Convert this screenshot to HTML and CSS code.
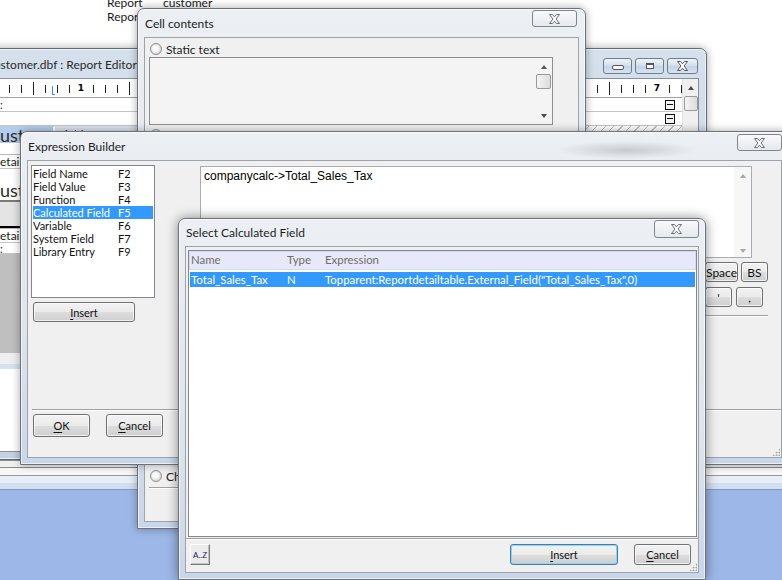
FILE: index.html
```html
<!DOCTYPE html>
<html>

<head>
    <meta charset="utf-8">
    <meta name="viewport" content="width=device-width, initial-scale=1.0">
    <title>Select Calculated Field</title>
    <link rel="stylesheet" href="styles.css">
</head>

<body>
    <div class="desktop">

        <div class="behind-text">
            <span>Report</span><span>customer</span>
            <span>Report</span><span>company</span>
        </div>

        <!-- report editor, mostly covered -->
        <div class="win report-editor">
            <div class="titlebar">
                <span class="title">Customer.dbf : Report Editor</span>
                <div class="caption-btns">
                    <span class="cbtn"><span class="ico-min"></span></span>
                    <span class="cbtn"><span class="ico-max"></span></span>
                    <span class="cbtn cbtn-close">
                        <svg width="13" height="10" viewBox="0 0 13 10"><path d="M1.5 .5h3l2 2.3 2-2.3h3l-3.4 4.5 3.4 4.5h-3l-2-2.3-2 2.3h-3l3.4-4.5z" fill="#fff" stroke="#4f5762"/></svg>
                    </span>
                </div>
            </div>
            <div class="client re-client">
                <div class="re-canvas">
                    <div class="ruler">
                        <span class="ruler-mark"></span>
                        <span class="rnum"><b>1</b></span>
                        <span class="rnum"><b>2</b></span>
                        <span class="rnum"><b>3</b></span>
                        <span class="rnum"><b>4</b></span>
                        <span class="rnum"><b>5</b></span>
                        <span class="rnum"><b>6</b></span>
                        <span class="rnum"><b>7</b></span>
                    </div>
                    <div class="re-row"><span>:</span><span class="collapse"></span></div>
                    <div class="re-row"><span></span><span class="collapse"></span></div>
                    <div class="re-head">
                        <span class="band-name">Customer</span>
                        <span class="field-cell">Field Name</span>
                    </div>
                    <div class="re-gap"></div>
                    <div class="re-row re-detail"><span>Detail</span></div>
                    <div class="re-gap"></div>
                    <div class="re-big">Customer</div>
                    <div class="re-shade"></div>
                    <div class="re-row re-detail"><span>Detail</span></div>
                    <div class="re-row re-colon"><span>:</span></div>
                    <div class="re-dark"></div>
                    <div class="re-light"></div>
                    <div class="re-tint"></div>
                </div>
                <div class="vscroll re-scroll">
                    <span class="arr-up"></span>
                    <span class="thumb"></span>
                </div>
            </div>
        </div>

        <div class="app-bottom"></div>

        <!-- cell contents -->
        <div class="win cell-contents">
            <div class="titlebar">
                <span class="title">Cell contents</span>
                <span class="close">
                    <svg width="13" height="10" viewBox="0 0 13 10"><path d="M1.5 .5h3l2 2.3 2-2.3h3l-3.4 4.5 3.4 4.5h-3l-2-2.3-2 2.3h-3l3.4-4.5z" fill="#fafafa" stroke="#6b7079"/></svg>
                </span>
            </div>
            <div class="client cc-client">
                <label class="opt"><span class="radio"></span>Static text</label>
                <div class="cc-text">
                    <div class="vscroll cc-scroll">
                        <span class="arr-up"></span>
                        <span class="thumb"></span>
                        <span class="arr-down"></span>
                    </div>
                </div>
                <label class="opt"><span class="radio"></span>Calculated</label>
                <div class="cc-bottom">
                    <label class="opt"><span class="radio"></span>Child band</label>
                    <div class="etched"></div>
                </div>
            </div>
        </div>

        <!-- expression builder -->
        <div class="win expr-builder">
            <div class="titlebar">
                <span class="title">Expression Builder</span>
                <span class="close">
                    <svg width="13" height="10" viewBox="0 0 13 10"><path d="M1.5 .5h3l2 2.3 2-2.3h3l-3.4 4.5 3.4 4.5h-3l-2-2.3-2 2.3h-3l3.4-4.5z" fill="#fafafa" stroke="#6b7079"/></svg>
                </span>
            </div>
            <div class="client eb-client">
                <div class="eb-main">
                    <div class="eb-left">
                        <ul class="listbox">
                            <li><span>Field Name</span><span>F2</span></li>
                            <li><span>Field Value</span><span>F3</span></li>
                            <li><span>Function</span><span>F4</span></li>
                            <li class="sel"><span>Calculated Field</span><span>F5</span></li>
                            <li><span>Variable</span><span>F6</span></li>
                            <li><span>System Field</span><span>F7</span></li>
                            <li><span>Library Entry</span><span>F9</span></li>
                        </ul>
                        <button class="btn eb-insert"><u>I</u>nsert</button>
                    </div>
                    <div class="eb-right">
                        <div class="expr-box">
                            <span class="expr-text">companycalc-&gt;Total_Sales_Tax</span>
                            <div class="vscroll eb-scroll">
                                <span class="arr-up"></span>
                                <span class="arr-down"></span>
                            </div>
                        </div>
                        <div class="keys">
                            <div class="key-row">
                                <button class="btn key">+</button>
                                <button class="btn key key-space">Space</button>
                                <button class="btn key">BS</button>
                            </div>
                            <div class="key-row key-row2">
                                <button class="btn key">"</button>
                                <button class="btn key">'</button>
                                <button class="btn key">,</button>
                            </div>
                        </div>
                        <div class="etched eb-rule"></div>
                    </div>
                </div>
                <div class="eb-bottom">
                    <button class="btn dlg-btn"><u>O</u>K</button>
                    <button class="btn dlg-btn"><u>C</u>ancel</button>
                </div>
                <span class="grip"></span>
            </div>
        </div>

        <!-- select calculated field (active) -->
        <div class="win select-calc">
            <div class="titlebar">
                <span class="title">Select Calculated Field</span>
                <span class="close">
                    <svg width="13" height="10" viewBox="0 0 13 10"><path d="M1.5 .5h3l2 2.3 2-2.3h3l-3.4 4.5 3.4 4.5h-3l-2-2.3-2 2.3h-3l3.4-4.5z" fill="#fafafa" stroke="#6b7079"/></svg>
                </span>
            </div>
            <div class="client sc-client">
                <div class="listview">
                    <div class="lv-head">
                        <span class="c-name">Name</span>
                        <span class="c-type">Type</span>
                        <span>Expression</span>
                    </div>
                    <div class="lv-row sel">
                        <span class="c-name">Total_Sales_Tax</span>
                        <span class="c-type">N</span>
                        <span>Topparent:Reportdetailtable.External_Field("Total_Sales_Tax",0)</span>
                    </div>
                </div>
                <div class="etched"></div>
                <div class="sc-bottom">
                    <button class="btn az">A..Z</button>
                    <button class="btn dlg-btn default"><u>I</u>nsert</button>
                    <button class="btn dlg-btn"><u>C</u>ancel</button>
                </div>
                <span class="grip"></span>
            </div>
        </div>

    </div>
</body>

</html>
```

FILE: styles.css
```css
/* vars */
:root {
    --ui: Lato, "Open Sans", sans-serif;
    --edge: #6c737b;
    --face: #f0f0f0;
    --sel: #3399ff;
}

html,
body {
    margin: 0;
}

body {
    width: 782px;
    height: 580px;
    overflow: hidden;
    background: #fff;
    font-family: var(--ui);
}

.desktop {
    position: relative;
    width: 782px;
    height: 580px;
    overflow: hidden;
}

.behind-text {
    position: absolute;
    left: 107px;
    top: -4px;
    display: grid;
    grid-template-columns: 56px auto;
    font-size: 12px;
    line-height: 14px;
    color: #1a1a1a;
}

/* window frames */
.win {
    position: absolute;
    box-sizing: border-box;
    display: flex;
    flex-direction: column;
    border: 1px solid var(--edge);
    border-radius: 7px 7px 0 0;
    padding: 0 6px 6px;
    background: linear-gradient(#eceff3, #dfe4ea 60%, #c9d6ea);
    box-shadow: 0 0 9px rgba(0, 0, 0, 0.35), inset 0 0 0 1px rgba(255, 255, 255, 0.6);
}

.titlebar {
    display: flex;
    align-items: flex-start;
    flex: none;
}

.title {
    align-self: center;
    padding-left: 1px;
    font-size: 12px;
    color: #1e1e1e;
    white-space: nowrap;
}

.close {
    margin-left: auto;
    width: 45px;
    height: 17px;
    margin-top: 1px;
    box-sizing: border-box;
    border: 1px solid #80868e;
    border-radius: 3px;
    background: linear-gradient(#f8f9fa, #e6e9ed);
    display: flex;
    align-items: center;
    justify-content: center;
}

.client {
    position: relative;
    flex: 1;
    min-height: 0;
    background: var(--face);
    border: 1px solid #9da3aa;
}

/* report editor */
.report-editor {
    left: -22px;
    top: 48px;
    width: 729px;
    height: 412px;
    padding: 0 7px 7px;
    background: linear-gradient(#d6e0ec, #c3d1e3);
    border-color: #5f6c7c;
}

.report-editor .titlebar {
    height: 29px;
}

.report-editor .title {
    padding: 0;
    color: #2a2a2a;
    margin-top: 2px;
}

.caption-btns {
    display: flex;
    gap: 3px;
    margin: 9px 1px 0 auto;
}

.cbtn {
    width: 29px;
    height: 16px;
    box-sizing: border-box;
    border: 1px solid #6e7d91;
    border-radius: 3px;
    background: linear-gradient(#eef3f9, #d3deeb 50%, #c5d3e5 51%, #d8e3f0);
    display: flex;
    align-items: center;
    justify-content: center;
}

.cbtn-close {
    width: 31px;
}

.ico-min {
    width: 10px;
    height: 3px;
    margin-top: 3px;
    border: 1px solid #4f5762;
    border-radius: 2px;
    background: #fff;
}

.ico-max {
    width: 8px;
    height: 6px;
    box-sizing: border-box;
    border: 1px solid #4f5762;
    border-top-width: 2px;
    background: #fff;
}

.re-client {
    display: flex;
    background: #fff;
    border-color: #8291a6;
}

.re-canvas {
    flex: 1;
    display: flex;
    flex-direction: column;
    overflow: hidden;
}

.ruler {
    position: relative;
    flex: none;
    height: 18px;
    border-bottom: 1px solid #a0a0a0;
    display: flex;
    padding-left: 46px;
    background-image:
        linear-gradient(to right, #222 1px, transparent 1px),
        linear-gradient(to right, #222 1px, transparent 1px);
    background-size: 96px 13px, 12px 8px;
    background-position: 46px 3px, 10px 6px;
    background-repeat: repeat-x;
}

.rnum {
    flex: none;
    width: 96px;
    text-align: center;
    font: bold 9px/18px "DejaVu Sans", sans-serif;
}

.rnum b {
    background: #fff;
    padding: 0 2px;
}

.ruler-mark {
    position: absolute;
    left: 65px;
    top: 7px;
    width: 3px;
    height: 9px;
    border-left: 1px solid #3a8de0;
    border-bottom: 1px solid #3a8de0;
    box-sizing: border-box;
}

.re-row {
    flex: none;
    height: 13px;
    border-bottom: 1px solid #c4c4c4;
    display: flex;
    align-items: center;
    padding-left: 13px;
    font-size: 11px;
    color: #222;
}

.collapse {
    margin: 0 7px 0 auto;
    width: 10px;
    height: 10px;
    box-sizing: border-box;
    border: 1px solid #111;
    background: linear-gradient(#111, #111) center / 6px 1px no-repeat, #f4f4f4;
}

.re-head {
    flex: none;
    height: 17px;
    display: flex;
    gap: 2px;
    background: repeating-linear-gradient(135deg, #fff 0 5px, #bdbdbd 5px 6px);
}

.band-name {
    width: 66px;
    padding-left: 1px;
    box-sizing: border-box;
    overflow: hidden;
    background: #b5cdec;
    font-size: 18px;
    line-height: 19px;
    color: #2c2c2c;
}

.field-cell {
    width: 200px;
    background: #dce3eb;
    font-size: 12px;
    line-height: 17px;
    padding-left: 3px;
    color: #1e1e1e;
}

.re-gap {
    flex: none;
    height: 11px;
}

.re-detail {
    border-top: 1px solid #b8b8b8;
    padding-left: 4px;
    font-size: 12px;
}

.re-big {
    flex: none;
    height: 20px;
    border-bottom: 2px solid #7a7a7a;
    padding-left: 1px;
    font-size: 18px;
    line-height: 20px;
    color: #2c2c2c;
    white-space: nowrap;
}

.re-shade {
    flex: none;
    height: 24px;
    background: #e4e4e4;
    border-bottom: 2px solid #000;
}

.re-colon {
    height: 10px;
}

.re-dark {
    flex: none;
    height: 99px;
    background: #bfbfbf;
}

.re-light {
    flex: none;
    height: 11px;
    background: #efefef;
}

.re-tint {
    flex: none;
    height: 5px;
    background: #d5e1f0;
}

/* scrollbars */
.vscroll {
    flex: none;
    width: 17px;
    display: flex;
    flex-direction: column;
    align-items: center;
    box-sizing: border-box;
}

.re-scroll {
    width: 16px;
    background: #f0f0f0;
    border-left: 1px solid #e2e2e2;
}

.arr-up,
.arr-down {
    width: 0;
    height: 0;
    border-left: 3.5px solid transparent;
    border-right: 3.5px solid transparent;
}

.arr-up {
    border-bottom: 4px solid #4a4a4a;
    margin-top: 7px;
}

.arr-down {
    border-top: 4px solid #4a4a4a;
    margin-top: auto;
    margin-bottom: 6px;
}

.thumb {
    width: 15px;
    height: 15px;
    box-sizing: border-box;
    border: 1px solid #9a9a9a;
    border-radius: 2px;
    background: linear-gradient(to right, #f4f4f4, #dcdcdc);
}

.re-scroll .thumb {
    width: 14px;
    margin-top: 6px;
}

.app-bottom {
    position: absolute;
    left: 0;
    top: 460px;
    width: 782px;
    height: 120px;
    background: linear-gradient(#8a8a8a 0 1px, #f0f0f0 1px 7px, #8a8a8a 7px 8px, #f7f7f7 8px 15px,
            #9a9a9a 15px 16px, #e8eef7 16px 23px, #d2dff1 23px 29px, #7f99c2 29px 30px, #9db8e8 30px);
}

/* cell contents */
.cell-contents {
    left: 137px;
    top: 8px;
    width: 449px;
    height: 521px;
}

.cell-contents .titlebar {
    height: 28px;
}

.cell-contents .close {
    margin-right: 2px;
}

.cc-client {
    display: flex;
    flex-direction: column;
}

.opt {
    display: flex;
    align-items: center;
    gap: 4px;
    font-size: 12px;
    color: #1e1e1e;
    padding-left: 5px;
    height: 14px;
}

.cc-client > .opt:first-child {
    margin-top: 4px;
}

.radio {
    width: 12px;
    height: 12px;
    box-sizing: border-box;
    border-radius: 50%;
    border: 1px solid #8b8d8f;
    background: radial-gradient(circle at 45% 45%, #fbfbfb 0 30%, #d6d6d6 75%);
}

.cc-text {
    margin: 1px 0 3px 4px;
    width: 404px;
    height: 68px;
    box-sizing: border-box;
    border: 1px solid #8e8e8e;
    background: #f4f4f4;
    display: flex;
    justify-content: flex-end;
}

.cc-scroll .arr-up {
    margin-top: 7px;
    border-bottom-color: #555;
}

.cc-scroll .thumb {
    margin-top: 5px;
}

.cc-bottom {
    margin-top: auto;
    padding-bottom: 32px;
}

.cc-bottom .opt {
    height: 12px;
}

.cc-bottom .etched {
    margin: 5px 0 0 4px;
}

.etched {
    height: 0;
    border-top: 1px solid #a0a0a0;
    border-bottom: 1px solid #fff;
}

/* buttons */
.btn {
    font-family: var(--ui);
    font-size: 11px;
    color: #111;
    padding: 0;
    box-sizing: border-box;
    border: 1px solid #707070;
    border-radius: 3px;
    background: linear-gradient(#f2f2f2, #ebebeb 50%, #dddddd 51%, #cfcfcf);
    box-shadow: inset 0 0 0 1px rgba(255, 255, 255, 0.7);
}

.btn u {
    text-decoration-thickness: 1px;
    text-underline-offset: 2px;
}

/* expression builder */
.expr-builder {
    left: 20px;
    top: 131px;
    width: 769px;
    height: 334px;
}

.expr-builder .titlebar {
    height: 28px;
    background: radial-gradient(ellipse 70px 9px at 600px 18px, rgba(110, 110, 110, 0.28), transparent);
}

.expr-builder .close {
    margin-top: 2px;
}

.eb-main {
    height: 248px;
    box-sizing: border-box;
    display: flex;
    padding: 4px 0 0 3px;
    gap: 45px;
}

.eb-left {
    width: 124px;
    flex: none;
}

.listbox {
    list-style: none;
    margin: 0;
    padding: 1px 1px;
    height: 133px;
    box-sizing: border-box;
    border: 1px solid #828790;
    background: #fff;
    font-size: 11px;
    line-height: 13px;
    color: #111;
}

.listbox li {
    display: grid;
    grid-template-columns: 85px auto;
    padding-left: 0;
}

.listbox li.sel {
    background: var(--sel);
    color: #fff;
}

.eb-insert {
    display: block;
    margin: 4px 0 0 2px;
    width: 102px;
    height: 20px;
}

.eb-right {
    width: 568px;
    flex: none;
    padding-top: 1px;
}

.expr-box {
    width: 552px;
    height: 92px;
    box-sizing: border-box;
    border: 1px solid #a9acb0;
    background: #fff;
    display: flex;
}

.expr-text {
    flex: 1;
    padding: 2px 0 0 3px;
    font: 12px "Liberation Sans", Arial, sans-serif;
    color: #000;
}

.eb-scroll {
    background: #f7f7f7;
}

.eb-scroll .arr-up {
    border-bottom-color: #a8a8a8;
}

.eb-scroll .arr-down {
    border-top-color: #a8a8a8;
    margin-bottom: 4px;
}

.keys {
    margin-top: 4px;
    display: flex;
    flex-direction: column;
    align-items: flex-end;
    gap: 5px;
}

.key-row {
    display: flex;
    gap: 3px;
}

.key-row2 {
    gap: 4px;
    margin-right: 5px;
}

.key {
    width: 27px;
    height: 20px;
    font-size: 12px;
}

.key-space {
    width: 33px;
}

.eb-rule {
    margin-top: 8px;
}

.eb-bottom {
    margin-left: 4px;
    border-top: 1px solid #a0a0a0;
    box-shadow: inset 0 1px #fff;
    padding: 4px 0 0 1px;
    display: flex;
    gap: 16px;
}

.dlg-btn {
    width: 57px;
    height: 23px;
}

.grip {
    position: absolute;
    right: 1px;
    bottom: 1px;
    width: 8px;
    height: 8px;
    background:
        radial-gradient(circle, #a6a6a6 0.9px, transparent 1.1px) 0 0 / 3px 3px;
    clip-path: polygon(100% 0, 100% 100%, 0 100%);
}

/* select calculated field */
.select-calc {
    left: 178px;
    top: 218px;
    width: 528px;
    height: 362px;
    box-shadow: 0 0 12px rgba(0, 0, 0, 0.45), inset 0 0 0 1px rgba(255, 255, 255, 0.6);
}

.select-calc .titlebar {
    height: 27px;
}

.select-calc .close {
    height: 18px;
}

.sc-client {
    display: flex;
    flex-direction: column;
}

.listview {
    margin: 3px 1px 1px 2px;
    height: 287px;
    box-sizing: border-box;
    border: 1px solid #828790;
    background: #fff;
    padding: 1px;
    font-size: 11.4px;
}

.lv-head,
.lv-row {
    display: flex;
    white-space: nowrap;
    padding-left: 1px;
}

.lv-head {
    height: 17px;
    line-height: 16px;
    background: #e7e9f9;
    border: 1px solid #d5d8ee;
    margin: -1px -1px 0;
    color: #6d6d6d;
}

.lv-row {
    margin-top: 2px;
    height: 15px;
    line-height: 15px;
}

.lv-row.sel {
    background: var(--sel);
    color: #fff;
}

.c-name {
    width: 96px;
    flex: none;
}

.c-type {
    width: 38px;
    flex: none;
}

.sc-bottom {
    display: flex;
    align-items: center;
    gap: 16px;
    padding: 4px 7px 0 4px;
}

.az {
    width: 20px;
    height: 21px;
    border-radius: 0;
    border-color: #fff #7a7a7a #7a7a7a #fff;
    background: #ececec;
    box-shadow: inset -1px -1px #c0c0c0;
    font-size: 8px;
    color: #1b1b5e;
    margin-right: auto;
}

.sc-bottom .dlg-btn {
    height: 21px;
}

.sc-bottom .default {
    width: 108px;
    border-color: #3c7fb1;
    box-shadow: inset 0 0 0 1px #8fd4f5;
}
```
